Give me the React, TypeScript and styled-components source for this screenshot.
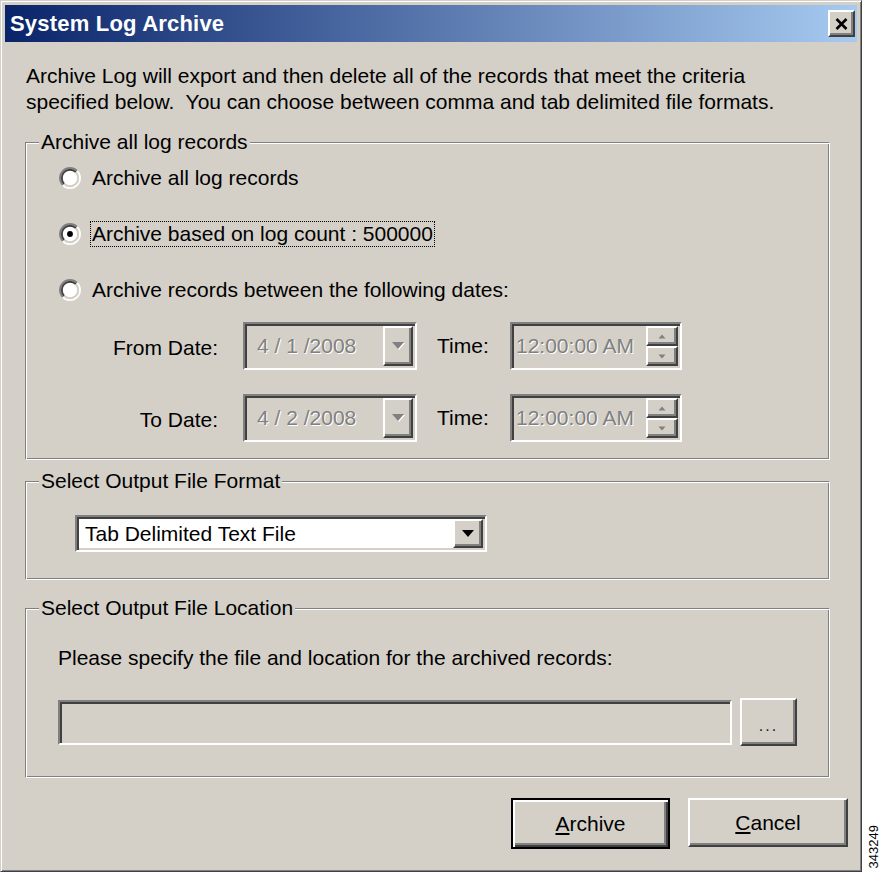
import React from 'react'
import styled, { createGlobalStyle, css } from 'styled-components'

const GlobalStyle = createGlobalStyle`
  html, body {
    margin: 0;
    padding: 0;
    background: #fff;
  }
  body {
    font-family: "Liberation Sans", Arial, sans-serif;
    font-size: 21px;
    color: #000;
  }
  * {
    box-sizing: border-box;
  }
`

const raised = css`
  border: 2px solid;
  border-color: #fff #404040 #404040 #fff;
  box-shadow: inset -2px -2px 0 #808080;
  background: #d4d0c8;
`

const sunken = css`
  border: 2px solid;
  border-color: #808080 #fff #fff #808080;
  box-shadow: inset 2px 2px 0 #404040, inset -2px -2px 0 #d4d0c8;
`

const disabledText = css`
  color: #808080;
  text-shadow: 1px 1px 0 #fff;
`

const Page = styled.div`
  display: flex;
  width: 885px;
  height: 872px;
`

const Window = styled.div`
  width: 862px;
  height: 872px;
  background: #d4d0c8;
  border: 1px solid;
  border-color: #d4d0c8 #404040 #404040 #d4d0c8;
  box-shadow: inset 1px 1px 0 #fff, inset -1px -1px 0 #808080;
  padding: 4px;
  display: flex;
  flex-direction: column;
`

const TitleBar = styled.div`
  height: 37px;
  flex-shrink: 0;
  display: flex;
  align-items: center;
  justify-content: space-between;
  padding: 0 2px 0 5px;
  background: linear-gradient(to right, #0a246a, #a6caf0);
`

const TitleText = styled.span`
  color: #fff;
  font-weight: bold;
  font-size: 22px;
  letter-spacing: 0.2px;
`

const CloseButton = styled.div`
  ${raised};
  width: 27px;
  height: 27px;
  display: flex;
  align-items: center;
  justify-content: center;
`

const Body = styled.div`
  padding: 21px 0 0 20px;
  display: flex;
  flex-direction: column;
`

const Description = styled.p`
  margin: 0 0 0 1px;
  line-height: 26px;
`

const Group = styled.fieldset<{ $top: number }>`
  margin: ${p => p.$top}px 0 0 0;
  padding: 0;
  width: 805px;
  min-width: 0;
  border: 1px solid;
  border-color: #808080 #fff #fff #808080;
  box-shadow: inset 1px 1px 0 #fff, inset -1px -1px 0 #808080;
`

const Legend = styled.legend`
  margin-left: 13px;
  padding: 0 2px;
  line-height: 22px;
  background: #d4d0c8;
`

const RadioList = styled.div`
  display: flex;
  flex-direction: column;
  gap: 26px;
  padding: 10px 0 0 33px;
`

const RadioRow = styled.div`
  display: flex;
  align-items: center;
  height: 30px;
  gap: 9px;
`

const RadioLabel = styled.span<{ $focused?: boolean }>`
  padding: 0 1px;
  line-height: 24px;
  border: 1px dotted ${p => (p.$focused ? '#000' : 'transparent')};
`

const DateGrid = styled.div`
  display: grid;
  grid-template-columns: 217px 174px 93px 172px;
  grid-auto-rows: 48px;
  row-gap: 24px;
  margin: 17px 0 17px 0;
  align-items: center;
`

const FieldLabel = styled.span<{ $align: 'left' | 'right' }>`
  text-align: ${p => p.$align};
  padding: ${p => (p.$align === 'right' ? '4px 25px 0 0' : '0 0 0 20px')};
`

const DisabledField = styled.div<{ $pad: number }>`
  ${sunken};
  height: 48px;
  background: #d4d0c8;
  display: flex;
  align-items: center;
  justify-content: space-between;
  padding: 2px 2px 2px ${p => p.$pad}px;
`

const FieldValue = styled.span<{ $disabled?: boolean }>`
  ${p => (p.$disabled ? disabledText : 'color: #000;')}
  white-space: pre;
`

const DropButton = styled.div`
  ${raised};
  width: 30px;
  height: 100%;
  display: flex;
  align-items: center;
  justify-content: center;
`

const Spinner = styled.div`
  width: 32px;
  height: 100%;
  display: flex;
  flex-direction: column;
`

const SpinButton = styled.div`
  ${raised};
  flex: 1;
  display: flex;
  align-items: center;
  justify-content: center;
`

const Select = styled.div`
  ${sunken};
  margin: 23px 0 27px 49px;
  width: 412px;
  height: 37px;
  background: #fff;
  display: flex;
  align-items: center;
  justify-content: space-between;
  padding: 2px 2px 2px 8px;
`

const HintText = styled.p`
  margin: 26px 0 0 32px;
  line-height: 26px;
`

const PathRow = styled.div`
  display: flex;
  align-items: center;
  gap: 8px;
  margin: 27px 0 31px 32px;
`

const PathInput = styled.div`
  ${sunken};
  width: 674px;
  height: 45px;
  background: #d4d0c8;
`

const PushButton = styled.div<{ $w: number; $h: number; $default?: boolean }>`
  width: ${p => p.$w}px;
  height: ${p => p.$h}px;
  display: flex;
  align-items: center;
  justify-content: center;
  background: #d4d0c8;
  ${p =>
    p.$default
      ? css`
          border: 2px solid #000;
          box-shadow: inset 2px 2px 0 #fff, inset -2px -2px 0 #404040, inset -4px -4px 0 #808080;
        `
      : raised}
`

const BrowseDots = styled.span`
  font-size: 16px;
  letter-spacing: 2px;
  padding-top: 8px;
  color: #202020;
`

const ButtonRow = styled.div`
  display: flex;
  justify-content: flex-end;
  align-items: flex-start;
  gap: 18px;
  margin-top: 20px;
  padding-right: 9px;
`

const SideStrip = styled.div`
  flex: 1;
  display: flex;
  flex-direction: column;
  justify-content: flex-end;
  align-items: center;
  padding-bottom: 4px;
`

const FigureNumber = styled.span`
  writing-mode: vertical-rl;
  transform: rotate(180deg);
  font-size: 13px;
  line-height: 14px;
`

const Radio = ({ checked }: { checked?: boolean }) => {
  const k = 0.7071
  const arc = (r: number) => {
    const a = 6 - r * k
    const b = 6 + r * k
    return {
      tl: `M${a} ${b} A${r} ${r} 0 0 1 ${b} ${a}`,
      br: `M${b} ${a} A${r} ${r} 0 0 1 ${a} ${b}`,
    }
  }
  const outer = arc(5.5)
  const inner = arc(4.5)
  return (
    <svg width="22" height="22" viewBox="0 0 12 12" style={{ flexShrink: 0 }}>
      <circle cx="6" cy="6" r="4" fill="#fff" />
      <path d={outer.tl} stroke="#808080" strokeWidth="1" fill="none" />
      <path d={outer.br} stroke="#fff" strokeWidth="1" fill="none" />
      <path d={inner.tl} stroke="#404040" strokeWidth="1" fill="none" />
      <path d={inner.br} stroke="#d4d0c8" strokeWidth="1" fill="none" />
      {checked && <circle cx="6" cy="6" r="1.6" fill="#000" />}
    </svg>
  )
}

const DownArrow = ({ disabled }: { disabled?: boolean }) => (
  <svg width="14" height="8" viewBox="0 0 14 8">
    {disabled && <polygon points="2,1 14,1 8,8" fill="#fff" />}
    <polygon points="1,0 13,0 7,7" fill={disabled ? '#808080' : '#000'} />
  </svg>
)

const SpinArrow = ({ up }: { up?: boolean }) => (
  <svg width="8" height="5" viewBox="0 0 8 5">
    <polygon points={up ? '4,0.5 7.5,4.5 0.5,4.5' : '0.5,0.5 7.5,0.5 4,4.5'} fill="#808080" />
  </svg>
)

const DateRow = ({ label, date }: { label: string; date: string }) => (
  <>
    <FieldLabel $align="right">{label}</FieldLabel>
    <DisabledField $pad={12}>
      <FieldValue $disabled>{date}</FieldValue>
      <DropButton>
        <DownArrow disabled />
      </DropButton>
    </DisabledField>
    <FieldLabel $align="left">Time:</FieldLabel>
    <DisabledField $pad={4}>
      <FieldValue $disabled>12:00:00 AM</FieldValue>
      <Spinner>
        <SpinButton>
          <SpinArrow up />
        </SpinButton>
        <SpinButton>
          <SpinArrow />
        </SpinButton>
      </Spinner>
    </DisabledField>
  </>
)

export default function App() {
  return (
    <>
      <GlobalStyle />
      <Page>
        <Window>
          <TitleBar>
            <TitleText>System Log Archive</TitleText>
            <CloseButton>
              <svg width="13" height="12" viewBox="0 0 13 12">
                <path d="M1.5 1 L11.5 11 M11.5 1 L1.5 11" stroke="#000" strokeWidth="2.6" />
              </svg>
            </CloseButton>
          </TitleBar>
          <Body>
            <Description>
              Archive Log will export and then delete all of the records that meet the criteria
              <br />
              specified below.&nbsp; You can choose between comma and tab delimited file formats.
            </Description>

            <Group $top={16}>
              <Legend>Archive all log records</Legend>
              <RadioList>
                <RadioRow>
                  <Radio />
                  <RadioLabel>Archive all log records</RadioLabel>
                </RadioRow>
                <RadioRow>
                  <Radio checked />
                  <RadioLabel $focused>Archive based on log count : 500000</RadioLabel>
                </RadioRow>
                <RadioRow>
                  <Radio />
                  <RadioLabel>Archive records between the following dates:</RadioLabel>
                </RadioRow>
              </RadioList>
              <DateGrid>
                <DateRow label="From Date:" date="4 / 1 /2008" />
                <DateRow label="To Date:" date="4 / 2 /2008" />
              </DateGrid>
            </Group>

            <Group $top={10}>
              <Legend>Select Output File Format</Legend>
              <Select>
                <FieldValue>Tab Delimited Text File</FieldValue>
                <DropButton>
                  <DownArrow />
                </DropButton>
              </Select>
            </Group>

            <Group $top={17}>
              <Legend>Select Output File Location</Legend>
              <HintText>Please specify the file and location for the archived records:</HintText>
              <PathRow>
                <PathInput />
                <PushButton $w={57} $h={48}>
                  <BrowseDots>...</BrowseDots>
                </PushButton>
              </PathRow>
            </Group>

            <ButtonRow>
              <PushButton $w={159} $h={51} $default>
                <span>
                  <u>A</u>rchive
                </span>
              </PushButton>
              <PushButton $w={160} $h={49}>
                <span>
                  <u>C</u>ancel
                </span>
              </PushButton>
            </ButtonRow>
          </Body>
        </Window>
        <SideStrip>
          <FigureNumber>343249</FigureNumber>
        </SideStrip>
      </Page>
    </>
  )
}
